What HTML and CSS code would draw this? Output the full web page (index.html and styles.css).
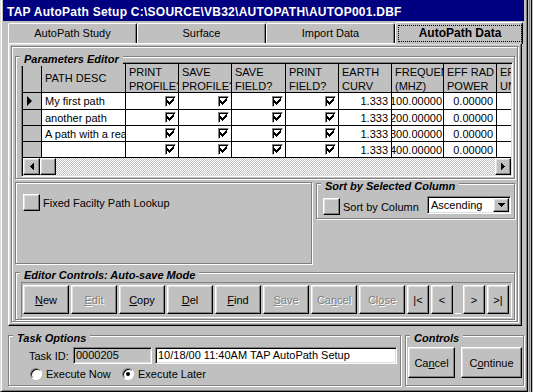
FILE: index.html
```html
<!DOCTYPE html>
<html>
<head>
<meta charset="utf-8">
<title>TAP AutoPath Setup</title>
<link rel="stylesheet" href="styles.css">
</head>
<body>
<svg class="defs" width="0" height="0">
  <symbol id="chk" viewBox="0 0 7 7"><path d="M6 0h1v1h-1z M5 1h2v1h-2z M0 2h1v1h-1z M4 2h3v1h-3z M0 3h2v1h-2z M3 3h3v1h-3z M0 4h5v1h-5z M1 5h3v1h-3z M2 6h1v1h-1z"/></symbol>
  <symbol id="down" viewBox="0 0 7 4"><path d="M0 0h7v1h-7z M1 1h5v1h-5z M2 2h3v1h-3z M3 3h1v1h-1z"/></symbol>
  <symbol id="left" viewBox="0 0 4 7"><path d="M3 0h1v7h-1z M2 1h1v5h-1z M1 2h1v3h-1z M0 3h1v1h-1z"/></symbol>
  <symbol id="right" viewBox="0 0 4 7"><path d="M0 0h1v7h-1z M1 1h1v5h-1z M2 2h1v3h-1z M3 3h1v1h-1z"/></symbol>
</svg>
<div class="window">
  <div class="titlebar">TAP AutoPath Setup C:\SOURCE\VB32\AUTOPATH\AUTOP001.DBF</div>

  <div class="tabs">
    <div class="tab">AutoPath Study</div>
    <div class="tab">Surface</div>
    <div class="tab">Import Data</div>
    <div class="tab active"><span class="focus">AutoPath Data</span></div>
  </div>

  <div class="tabpanel">
    <div class="inner">

      <div class="frame params">
        <span class="cap">Parameters Editor</span>
        <div class="grid">
          <div class="c hd"></div>
          <div class="c hd one">PATH DESC</div>
          <div class="c hd">PRINT<br>PROFILE?</div>
          <div class="c hd">SAVE<br>PROFILE?</div>
          <div class="c hd">SAVE<br>FIELD?</div>
          <div class="c hd">PRINT<br>FIELD?</div>
          <div class="c hd">EARTH<br>CURV</div>
          <div class="c hd">FREQUENCY<br>(MHZ)</div>
          <div class="c hd">EFF RAD<br>POWER</div>
          <div class="c hd last">EFF<br>UNITS</div>

          <div class="c rh"><span class="cur"></span></div>
          <div class="c txt">My first path</div>
          <div class="c ck"><span class="box"><svg><use href="#chk"/></svg></span></div>
          <div class="c ck"><span class="box"><svg><use href="#chk"/></svg></span></div>
          <div class="c ck"><span class="box"><svg><use href="#chk"/></svg></span></div>
          <div class="c ck"><span class="box"><svg><use href="#chk"/></svg></span></div>
          <div class="c num">1.333</div>
          <div class="c num freq">100.00000</div>
          <div class="c num">0.00000</div>
          <div class="c last"></div>

          <div class="c rh"></div>
          <div class="c txt">another path</div>
          <div class="c ck"><span class="box"><svg><use href="#chk"/></svg></span></div>
          <div class="c ck"><span class="box"><svg><use href="#chk"/></svg></span></div>
          <div class="c ck"><span class="box"><svg><use href="#chk"/></svg></span></div>
          <div class="c ck"><span class="box"><svg><use href="#chk"/></svg></span></div>
          <div class="c num">1.333</div>
          <div class="c num freq">200.00000</div>
          <div class="c num">0.00000</div>
          <div class="c last"></div>

          <div class="c rh"></div>
          <div class="c txt">A path with a really long name</div>
          <div class="c ck"><span class="box"><svg><use href="#chk"/></svg></span></div>
          <div class="c ck"><span class="box"><svg><use href="#chk"/></svg></span></div>
          <div class="c ck"><span class="box"><svg><use href="#chk"/></svg></span></div>
          <div class="c ck"><span class="box"><svg><use href="#chk"/></svg></span></div>
          <div class="c num">1.333</div>
          <div class="c num freq">300.00000</div>
          <div class="c num">0.00000</div>
          <div class="c last"></div>

          <div class="c rh"></div>
          <div class="c txt"></div>
          <div class="c ck"><span class="box"><svg><use href="#chk"/></svg></span></div>
          <div class="c ck"><span class="box"><svg><use href="#chk"/></svg></span></div>
          <div class="c ck"><span class="box"><svg><use href="#chk"/></svg></span></div>
          <div class="c ck"><span class="box"><svg><use href="#chk"/></svg></span></div>
          <div class="c num">1.333</div>
          <div class="c num freq">400.00000</div>
          <div class="c num">0.00000</div>
          <div class="c last"></div>

          <div class="sb">
            <span class="btn sarrow"><svg class="arr"><use href="#left"/></svg></span>
            <span class="btn thumb"></span>
            <span class="track"></span>
            <span class="btn sarrow end"><svg class="arr"><use href="#right"/></svg></span>
          </div>
        </div>
      </div>

      <div class="mid">
        <div class="frame lookup">
          <div class="opt"><span class="btn sq"></span><span class="optlbl">Fixed Facilty Path Lookup</span></div>
        </div>
        <div class="frame sort">
          <span class="cap">Sort by Selected Column</span>
          <div class="sortrow">
            <span class="btn sq"></span>
            <span class="sortlbl">Sort by Column</span>
            <div class="field combo">
              <span class="combotext">Ascending</span>
              <span class="btn drop"><svg class="tri"><use href="#down"/></svg></span>
            </div>
          </div>
        </div>
      </div>

      <div class="frame editor">
        <span class="cap">Editor Controls: Auto-save Mode</span>
        <div class="navbox">
          <button class="btn eb"><u>N</u>ew</button>
          <button class="btn eb off"><u>E</u>dit</button>
          <button class="btn eb"><u>C</u>opy</button>
          <button class="btn eb"><u>D</u>el</button>
          <button class="btn eb"><u>F</u>ind</button>
          <button class="btn eb off"><u>S</u>ave</button>
          <button class="btn eb off">Ca<u>n</u>cel</button>
          <button class="btn eb off">Cl<u>o</u>se</button>
          <button class="btn nb">|&lt;</button>
          <button class="btn nb">&lt;</button>
          <span class="pos"></span>
          <button class="btn nb">&gt;</button>
          <button class="btn nb">&gt;|</button>
        </div>
      </div>

    </div>
  </div>

  <div class="bottom">
    <div class="frame task">
      <span class="cap">Task Options</span>
      <div class="taskrow">
        <span class="tlabel">Task ID:</span>
        <div class="field tid">0000205</div>
        <div class="field tdesc">10/18/00 11:40AM TAP AutoPath Setup</div>
      </div>
      <div class="radios">
        <span class="ropt first"><span class="radio"></span>Execute Now</span>
        <span class="ropt"><span class="radio on"></span>Execute Later</span>
      </div>
    </div>
    <div class="frame controls">
      <span class="cap">Controls</span>
      <div class="ctlrow">
        <button class="btn cbtn">Ca<u>n</u>cel</button>
        <button class="btn cbtn wide">C<u>o</u>ntinue</button>
      </div>
    </div>
  </div>
</div>
</body>
</html>
```

FILE: styles.css
```css
/* win95 style form, fixed 533x392 */
body {
    margin: 0;
    width: 533px;
    height: 392px;
    overflow: hidden;
    background: linear-gradient(90deg, #c0c0c0 529px, #808080 529px 530px, #c0c0c0 530px 531px, #000 531px 532px, #c0c0c0 532px);
    font-family: "Liberation Sans", Arial, sans-serif;
    font-size: 11px;
    color: #000;
}
.defs {
    position: absolute;
    width: 0;
    height: 0;
}

.window {
    box-sizing: border-box;
    width: 528px;
    height: 392px;
    background: #c0c0c0;
    border-left: 1px solid #dfdfdf;
    border-right: 1px solid #000;
    border-bottom: 1px solid #000;
    box-shadow: inset 1px 0 #fff, inset -1px -1px #808080;
    padding: 0 3px 3px 2px;
}

.titlebar {
    box-sizing: border-box;
    height: 21px;
    background: #000080;
    color: #fff;
    font-weight: bold;
    font-size: 12px;
    letter-spacing: 0.25px;
    line-height: 17px;
    padding: 4px 0 0 4px;
    white-space: nowrap;
}

/* tabs */
.tabs {
    position: relative;
    z-index: 1;
    display: flex;
    align-items: flex-end;
    height: 22px;
    padding-left: 5px;
}
.tab {
    box-sizing: border-box;
    width: 129px;
    height: 20px;
    border: 1px solid;
    border-color: #fff #000 transparent #fff;
    border-bottom: none;
    border-radius: 2px 2px 0 0;
    box-shadow: inset -1px 0 #808080;
    background: #c0c0c0;
    text-align: center;
    line-height: 13px;
    padding-top: 3px;
}
.tab.active {
    width: 128px;
    height: 22px;
    margin-bottom: -1px;
    padding: 2px 0 0 2px;
    font-weight: bold;
    font-size: 12px;
}
.tab .focus {
    display: block;
    box-sizing: border-box;
    height: 17px;
    border: 1px dotted #000;
    line-height: 15px;
}

.tabpanel {
    box-sizing: border-box;
    width: 514px;
    height: 283px;
    margin-left: 5px;
    border: 1px solid;
    border-color: #fff #000 #000 #fff;
    box-shadow: inset -1px -1px #808080, inset 1px 1px #dfdfdf;
    padding: 2px;
}
.inner {
    box-sizing: border-box;
    width: 507px;
    height: 276px;
    border: 1px solid #808080;
    box-shadow: inset 1px 1px #fff, 1px 1px #fff;
}

/* etched group frames */
.frame {
    position: relative;
    box-sizing: border-box;
    border: 1px solid #808080;
    box-shadow: inset 1px 1px #fff, 1px 1px #fff;
}
.frame .cap {
    position: absolute;
    top: -4px;
    left: 4px;
    padding: 0 4px;
    background: #c0c0c0;
    font-weight: bold;
    font-style: italic;
    line-height: 13px;
    white-space: nowrap;
}

/* 3d pieces */
.btn {
    box-sizing: border-box;
    display: flex;
    align-items: center;
    justify-content: center;
    margin: 0;
    padding: 0;
    border: 1px solid;
    border-color: #fff #000 #000 #fff;
    box-shadow: inset -1px -1px #808080, inset 1px 1px #dfdfdf;
    background: #c0c0c0;
    font-family: inherit;
    font-size: 11px;
    color: #000;
}
.btn.off {
    color: #808080;
    text-shadow: 1px 1px #fff;
}
.field {
    box-sizing: border-box;
    border: 1px solid;
    border-color: #808080 #fff #fff #808080;
    box-shadow: inset 1px 1px #000, inset -1px -1px #dfdfdf;
    background: #fff;
}

/* parameters grid */
.params {
    width: 500px;
    height: 123px;
    margin: 9px 0 0 3px;
}
.grid {
    box-sizing: border-box;
    width: 492px;
    height: 115px;
    margin: 5px 0 0 5px;
    border: 1px solid;
    border-color: #808080 #fff #fff #808080;
    box-shadow: inset 1px 1px #000, inset -1px -1px #dfdfdf;
    padding: 1px;
    display: grid;
    grid-template-columns: 19px 84px 53px 53px 54px 53px 53px 52px 53px 14px;
    grid-template-rows: 29px 17px 16px 16px 16px 17px;
}
.c {
    box-sizing: border-box;
    border-right: 1px solid #000;
    border-bottom: 1px solid #000;
    overflow: hidden;
    white-space: nowrap;
    background: #fff;
    line-height: 14px;
}
.c.last {
    border-right: none;
}
.hd {
    background: #c0c0c0;
    padding: 1px 0 0 3px;
}
.hd.one {
    display: flex;
    align-items: center;
    padding-top: 0;
}
.rh {
    background: #c0c0c0;
    display: flex;
    align-items: center;
}
.cur {
    width: 0;
    height: 0;
    margin-left: 4px;
    border-left: 5px solid #000;
    border-top: 5px solid transparent;
    border-bottom: 5px solid transparent;
}
.txt {
    display: flex;
    align-items: center;
    padding-left: 3px;
}
.num {
    display: flex;
    align-items: center;
    justify-content: flex-end;
    padding-right: 3px;
}
.num.freq {
    padding-right: 1px;
}
.ck {
    display: flex;
    align-items: center;
    justify-content: flex-end;
    padding-right: 2px;
}
.box {
    box-sizing: border-box;
    width: 11px;
    height: 11px;
    border: 1px solid;
    border-color: #808080 #fff #fff #808080;
    box-shadow: inset 1px 1px #000;
    background: #fff;
    padding: 1px 0 0 1px;
}
.box svg {
    display: block;
    width: 7px;
    height: 7px;
}
.sb {
    grid-column: 1 / -1;
    display: flex;
    background: repeating-conic-gradient(#fff 0 25%, #c0c0c0 0 50%) 0 0 / 2px 2px;
}
.sarrow {
    width: 17px;
    height: 17px;
}
.sarrow.end {
    width: 16px;
}
.thumb {
    width: 16px;
    height: 17px;
}
.track {
    flex: 1;
}
.arr {
    width: 4px;
    height: 7px;
}

/* middle panels */
.mid {
    display: flex;
    align-items: flex-start;
    margin: 3px 0 0 3px;
}
.lookup {
    width: 297px;
    height: 82px;
}
.opt {
    display: flex;
    align-items: center;
    margin: 11px 0 0 7px;
}
.sq {
    width: 17px;
    height: 17px;
}
.optlbl {
    margin-left: 3px;
}
.sort {
    width: 199px;
    height: 36px;
    margin: 1px 0 0 4px;
}
.sortrow {
    display: flex;
    align-items: center;
    margin: 11px 0 0 6px;
}
.sortrow .sq {
    align-self: flex-start;
    margin-top: 3px;
}
.sortlbl {
    width: 84px;
    margin: 4px 0 0 3px;
}
.combo {
    display: flex;
    align-items: center;
    width: 84px;
    height: 18px;
    padding: 1px;
}
.combotext {
    flex: 1;
    padding-left: 2px;
}
.drop {
    width: 16px;
    height: 14px;
}
.tri {
    width: 7px;
    height: 4px;
}

/* editor controls */
.editor {
    width: 500px;
    height: 48px;
    margin: 8px 0 0 3px;
}
.navbox {
    box-sizing: border-box;
    width: 491px;
    height: 36px;
    margin: 9px 0 0 5px;
    border: 1px solid;
    border-color: #808080 #fff #fff #808080;
    padding: 2px 1px;
    display: flex;
    gap: 2px;
}
.eb {
    width: 46px;
    height: 29px;
}
.nb {
    width: 22px;
    height: 29px;
}
.pos {
    width: 6px;
    height: 29px;
    box-sizing: border-box;
    border-bottom: 1px solid #fff;
}

/* bottom */
.bottom {
    display: flex;
    margin: 9px 0 0 5px;
}
.task {
    width: 393px;
    height: 51px;
}
.taskrow {
    display: flex;
    align-items: center;
    height: 17px;
    margin: 11px 0 0 20px;
}
.tlabel {
    width: 44px;
}
.tid {
    width: 79px;
    height: 17px;
    background: #c0c0c0;
    padding-left: 2px;
    line-height: 15px;
}
.tdesc {
    width: 242px;
    height: 17px;
    margin-left: 3px;
    padding-left: 2px;
    line-height: 15px;
    white-space: nowrap;
}
.radios {
    display: flex;
    align-items: center;
    height: 14px;
    margin: 3px 0 0 21px;
}
.ropt {
    display: flex;
    align-items: center;
}
.ropt.first {
    width: 92px;
}
.radio {
    position: relative;
    box-sizing: border-box;
    width: 12px;
    height: 12px;
    margin-right: 4px;
    border-radius: 50%;
    border: 1px solid;
    border-color: #808080 #fff #fff #808080;
    box-shadow: inset 1px 1px #000;
    background: #fff;
}
.radio.on::after {
    content: "";
    position: absolute;
    left: 3px;
    top: 3px;
    width: 4px;
    height: 4px;
    border-radius: 50%;
    background: #000;
}
.controls {
    width: 119px;
    height: 51px;
    margin-left: 4px;
}
.ctlrow {
    display: flex;
    gap: 6px;
    margin: 11px 0 0 2px;
}
.cbtn {
    width: 47px;
    height: 31px;
}
.cbtn.wide {
    width: 61px;
}
```
